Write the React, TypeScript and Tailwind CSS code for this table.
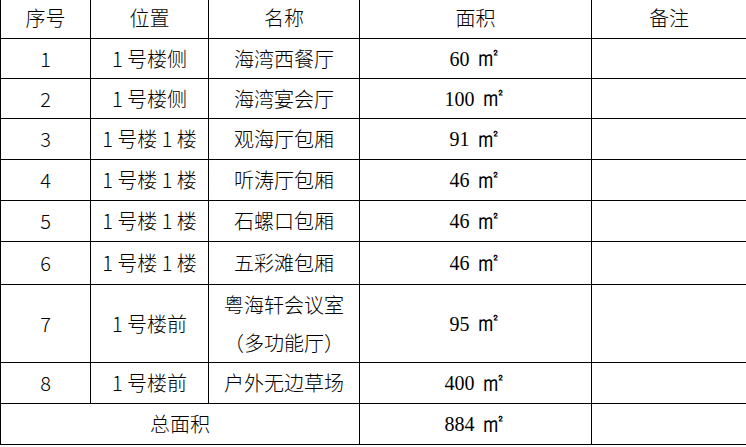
const rows = [
  { no: '1', pos: '1 号楼侧', name: ['海湾西餐厅'], area: '60', h: 'h-[39px]' },
  { no: '2', pos: '1 号楼侧', name: ['海湾宴会厅'], area: '100', h: 'h-[39px]' },
  { no: '3', pos: '1 号楼 1 楼', name: ['观海厅包厢'], area: '91', h: 'h-[40px]' },
  { no: '4', pos: '1 号楼 1 楼', name: ['听涛厅包厢'], area: '46', h: 'h-[40px]' },
  { no: '5', pos: '1 号楼 1 楼', name: ['石螺口包厢'], area: '46', h: 'h-[40px]' },
  { no: '6', pos: '1 号楼 1 楼', name: ['五彩滩包厢'], area: '46', h: 'h-[42px]' },
  { no: '7', pos: '1 号楼前', name: ['粤海轩会议室', '（多功能厅）'], area: '95', h: 'h-[77px]' },
  { no: '8', pos: '1 号楼前', name: ['户外无边草场'], area: '400', h: 'h-[40px]' },
];

const cell = 'bg-white flex items-center justify-center';

function Area({ value }: { value: string }) {
  return (
    <span className="flex items-center font-['Liberation_Serif',serif] text-[20px]">
      {value}
      <span className="ml-[5px] text-[27px] leading-none -mt-[2px]">㎡</span>
    </span>
  );
}

export default function App() {
  return (
    <div className="w-[746px] h-[447px] bg-white overflow-hidden font-['Noto_Sans_CJK_SC',sans-serif] font-light text-[20px] text-black leading-none">
      <div className="grid grid-cols-[89px_117px_150px_231px_1fr] gap-px bg-black pl-px pb-px">
        <div className={`${cell} h-[38px] pb-[3px]`}>序号</div>
        <div className={`${cell} pb-[3px]`}>位置</div>
        <div className={`${cell} pb-[3px]`}>名称</div>
        <div className={`${cell} pb-[3px]`}>面积</div>
        <div className={`${cell} pb-[3px]`}>备注</div>

        {rows.map((r) => (
          <div key={r.no} className="contents">
            <div className={`${cell} ${r.h}`}>{r.no}</div>
            <div className={cell}>{r.pos}</div>
            <div className={`${cell} flex-col gap-[18px]`}>
              {r.name.map((n) => (
                <span key={n}>{n}</span>
              ))}
            </div>
            <div className={cell}>
              <Area value={r.area} />
            </div>
            <div className={cell} />
          </div>
        ))}

        <div className={`${cell} col-span-3 h-[40px]`}>总面积</div>
        <div className={cell}>
          <Area value="884" />
        </div>
        <div className={cell} />
      </div>
    </div>
  );
}
